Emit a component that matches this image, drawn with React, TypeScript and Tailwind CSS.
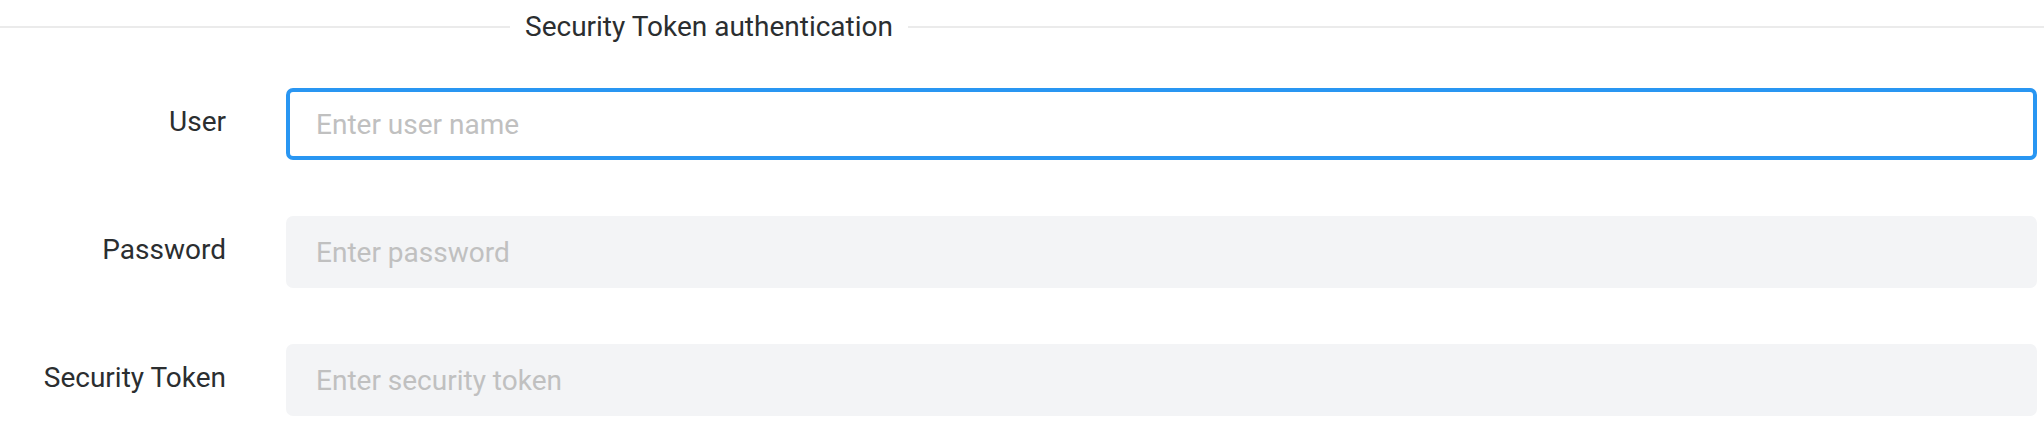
const fields = [
  { label: 'User', placeholder: 'Enter user name', active: true },
  { label: 'Password', placeholder: 'Enter password', active: false },
  { label: 'Security Token', placeholder: 'Enter security token', active: false },
];

const App = () => {
  return (
    <div className="w-[2044px] h-[436px] bg-white font-['Roboto',sans-serif] text-[28px] text-[#2b2e30]">
      {/* Legend */}
      <div className="flex items-center h-[54px]">
        <div className="w-[510px] h-[2px] bg-[#ebebeb] flex-none" />
        <span className="mx-[15px] leading-none whitespace-nowrap">Security Token authentication</span>
        <div className="flex-1 h-[2px] bg-[#ebebeb]" />
      </div>

      <div className="flex flex-col gap-[56px] mt-[34px] pr-[7px]">
        {fields.map((f) => (
          <div key={f.label} className="flex items-center">
            <label className="w-[226px] flex-none text-right pb-[4px] leading-none">{f.label}</label>
            <input
              type={f.label === 'Password' ? 'password' : 'text'}
              placeholder={f.placeholder}
              className={`ml-[60px] flex-1 h-[72px] rounded-[7px] border-[4px] pl-[26px] outline-none text-[28px] placeholder:text-[#c0c0c0] ${
                f.active ? 'border-[#2996f2] bg-white' : 'border-transparent bg-[#f3f4f6]'
              }`}
            />
          </div>
        ))}
      </div>
    </div>
  );
};

export default App;
